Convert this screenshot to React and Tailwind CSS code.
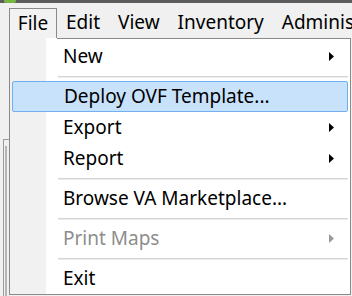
const Arrow = ({ color = "#000" }) => (
  <svg width="5" height="9" viewBox="0 0 5 9" className="block">
    <path d="M0 0 L5 4.5 L0 9 Z" fill={color} />
  </svg>
);

const Item = ({ label, arrow, disabled, active }) => (
  <div
    className={
      "h-[31px] flex items-center pr-[16px] " +
      (active
        ? "mx-[2px] pl-[51px] border border-[#70b0f0] bg-[#c9e2fc] rounded-[2px]"
        : "pl-[53px]")
    }
  >
    <span className={"flex-1 " + (disabled ? "text-[#8d8d8d]" : "text-black")}>{label}</span>
    {arrow && <Arrow color={disabled ? "#9a9a9a" : "#000"} />}
  </div>
);

const Sep = () => (
  <div className="h-[9px] flex flex-col justify-center ml-[48px] mr-[2px]">
    <div className="h-[1px] bg-[#d5d5d5]" />
    <div className="h-[1px] bg-[#ececec]" />
  </div>
);

export default function App() {
  return (
    <div className="w-[352px] h-[296px] overflow-hidden bg-[#f0f0f0] font-['Noto_Sans',sans-serif] text-[19px] leading-none text-black">
      {/* title strip */}
      <div className="h-[3px] bg-[#5c5c5c] flex">
        <div className="ml-[4px] w-[12px] h-[3px] bg-[#74b842] rounded-b-[2px]" />
      </div>

      {/* menu bar */}
      <div className="h-[35px] flex items-end overflow-hidden">
        <div className="shrink-0 ml-[9px] w-[48px] h-[30px] border border-b-0 border-[#8a8a8a] bg-[#f2f2f2] flex items-center justify-center pb-[1px]">
          File
        </div>
        <div className="shrink-0 h-[30px] flex items-center pb-[1px] pl-[9px] gap-[18px] whitespace-nowrap">
          <span>Edit</span>
          <span>View</span>
          <span>Inventory</span>
          <span>Administration</span>
        </div>
      </div>

      <div className="flex">
        {/* window behind */}
        <div className="w-[9px] h-[258px]">
          <div className="mt-[101px] ml-[3px] w-[6px] h-[160px] border-t border-l border-[#9a9a9a]">
            <div className="mt-[6px] ml-[1px] h-full border-l-2 border-[#b5b5b5]" />
          </div>
        </div>

        {/* dropdown */}
        <div className="w-[342px] h-[257px] border border-t-0 border-[#8a8a8a] bg-[linear-gradient(to_right,#f1f1f1_0,#f1f1f1_36px,#ffffff_36px)]">
          <div className="flex h-[1px]">
            <div className="w-[47px]" />
            <div className="flex-1 bg-[#8a8a8a]" />
          </div>
          <div className="pt-[2px]">
            <Item label="New" arrow />
            <Sep />
            <Item label="Deploy OVF Template..." active />
            <Item label="Export" arrow />
            <Item label="Report" arrow />
            <Sep />
            <Item label="Browse VA Marketplace..." />
            <Sep />
            <Item label="Print Maps" arrow disabled />
            <Sep />
            <Item label="Exit" />
          </div>
        </div>
      </div>
    </div>
  );
}
